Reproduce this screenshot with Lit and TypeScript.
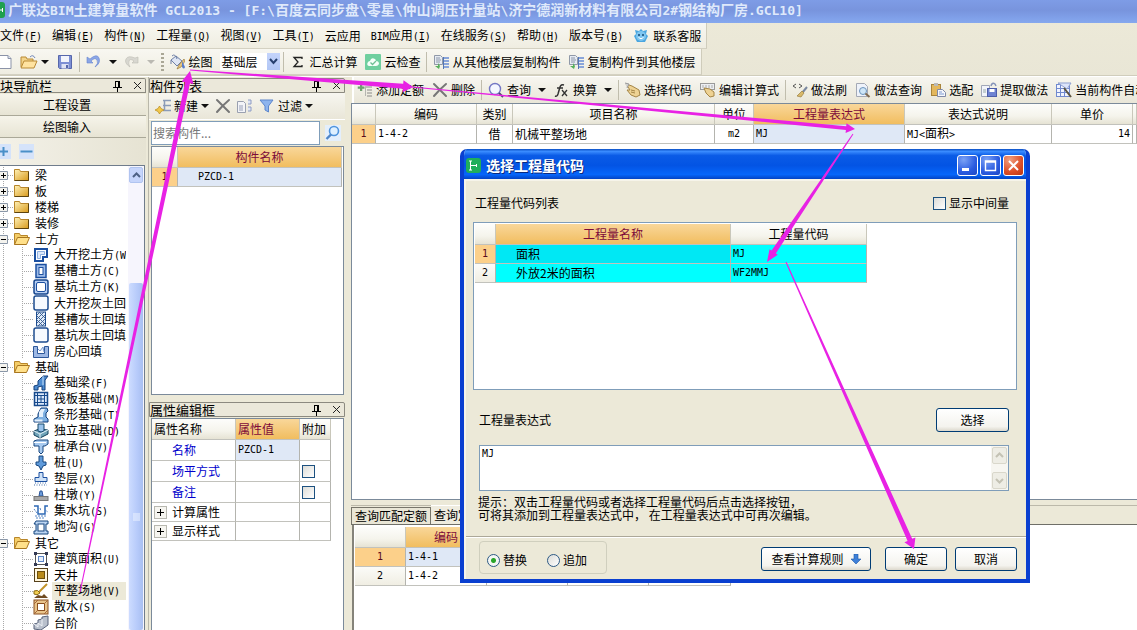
import { LitElement, html, svg, css, nothing, TemplateResult } from "lit";
import { customElement, state } from "lit/decorators.js";
import { classMap } from "lit/directives/class-map.js";

const icon = (body: unknown, w = 16, h = 16) =>
  html`<svg class="ic" width=${w} height=${h} viewBox="0 0 ${w} ${h}" aria-hidden="true">${body}</svg>`;

const I: Record<string, TemplateResult> = {
  newDoc: icon(svg`<path d="M0 1.5h8l3 3v10H0" fill="#fff" stroke="#8b93a8"/><path d="M8 1.5v3h3" fill="#dfe5f2" stroke="#8b93a8"/>`, 12),
  open: icon(svg`<path d="M1 13V3h5l1 2h6v2" fill="#f3d48a" stroke="#b98a35"/><path d="M1 14L4 7h13l-3 7z" fill="#ffe3a0" stroke="#b98a35"/><path d="M10 3q3-3 5 1" stroke="#6f86b8" fill="none"/>`, 18),
  save: icon(svg`<path d="M1.500 1.500h13v13h-12l-1-1z" fill="#7d8fd4" stroke="#5767ab"/><rect x="4" y="2" width="8" height="6" fill="#f2f4fb"/><rect x="4.500" y="10" width="7" height="4.500" fill="#dfe3f4"/><rect x="9" y="11" width="2" height="3" fill="#5767ab"/>`),
  undo: icon(svg`<path d="M1 3v6h6L5 7q4-4 6-1t-2 7q6-4 4-9T4 5z" fill="#8ba6e6" stroke="#6684cf" stroke-width=".6"/>`, 14),
  redo: icon(svg`<path d="M13 3v6H7l2-2Q5 4 4 7t1 6Q-1 9 1 5t9-1z" fill="#d8d7d0" stroke="#bdbcb4" stroke-width=".6"/>`, 14),
  pour: icon(svg`<path d="M2 6l5-4 6 5-5 5z" fill="#dfe6f4" stroke="#6d7fa6"/><path d="M3 2q3-3 5 3M2 6v4" stroke="#6d7fa6" fill="none"/><path d="M15 5l-5 6-2 4 4-2 4-6z" fill="#e8c77d" stroke="#9b7b3c" stroke-width=".7"/><path d="M13 7v6q2 3 3 0z" fill="#5b7ecb"/>`),
  cloud: icon(svg`<rect width="16" height="16" rx="1" fill="#6fcf9f"/><path d="M4 12q-3-1-1-4 1-1 2-1 1-4 5-2 1 1 1 2 3 0 3 3-1 2-3 2z" fill="#f4fff9"/><path d="M5.500 8.500l2 2 3.500-3.500" stroke="#6fbf95" stroke-width="1.300" fill="none"/>`),
  copyFrom: icon(svg`<path d="M1.500 1.500h6l2 2v7h-8z" fill="#e6ebf3" stroke="#9099a8"/><path d="M3 4h4M3 6h5M3 8h4" stroke="#8c96a8"/><path d="M5 9v3H2l4 3 1-3" fill="#56b05c"/><path d="M11 4h5M11 7h5M11 10h5M11 13h5" stroke="#8aa5da" stroke-width="2"/><path d="M10.500 3v12" stroke="#5476b5"/>`),
  chat: icon(svg`<path d="M3 6L2 2l4 1 2-2 2 2 4-1-1 4 2 2-3 6H4L1 8z" fill="#4aa6e0"/><circle cx="8" cy="8" r="5" fill="#7fc6f0"/><circle cx="6" cy="7" r="1" fill="#124a78"/><circle cx="10" cy="7" r="1" fill="#124a78"/><path d="M5.500 9.500q2.500 2.500 5 0" stroke="#fff" fill="none"/>`),
  addList: icon(svg`<path d="M1 6h3V3h3v3h3v3H7v3H4V9H1z" fill="#6fa06f" transform="scale(.75)"/><path d="M8 5h7M10 8h5M10 11h5M10 14h5" stroke="#8a8a88"/><path d="M8.500 5v9" stroke="#b5b5b0"/>`),
  del: icon(svg`<path d="M2 2q6 6 12 12M14 2Q8 7 2 14" stroke="#777" stroke-width="2" fill="none" stroke-linecap="round"/>`),
  find: icon(svg`<circle cx="7" cy="7" r="5.500" fill="#f4f7ff" stroke="#7377c4" stroke-width="1.400"/><path d="M11 11l4 4" stroke="#45456d" stroke-width="2"/>`),
  fx: icon(svg`<path d="M1 14q2 1 3-2L6 5q1-3 4-2M3 6h6" stroke="#333" stroke-width="1.500" fill="none"/><path d="M8 8l5 6M13 8l-5 6" stroke="#333" stroke-width="1.300"/>`),
  hand: icon(svg`<path d="M1 2l6 2 7 4 1 5-4 2-5-2-4-5 3 0z" fill="#eed293" stroke="#a48546"/><path d="M6 8l4 1M6 10l4 1" stroke="#a48546"/><path d="M0 1l4 1-2 4" fill="#d4d4d4" stroke="#999"/>`),
  handEdit: icon(svg`<rect x=".5" y="1.500" width="14" height="6" fill="#eceef2" stroke="#9a9a9a"/><path d="M3 3v3M6 3v3M9 3v3M12 3v3" stroke="#aaa"/><path d="M4 6l6 1 4 3v4l-4 1-4-4z" fill="#eed293" stroke="#a48546"/>`),
  brush: icon(svg`<path d="M4 2L1 4l3 2M7 2l3 2-3 2" stroke="#555" fill="none"/><path d="M15 5l-5 6" stroke="#7a88a0" stroke-width="2"/><path d="M10 9l2 2-3 4-4-1z" fill="#d9b96a" stroke="#9b7f42" stroke-width=".7"/>`),
  docFind: icon(svg`<path d="M1.500 1.500h8l3 3v10h-11z" fill="#eef2fa" stroke="#a4a9b5"/><circle cx="8" cy="9" r="3.500" fill="#cfe6f7" stroke="#6c94bb"/><path d="M10.500 11.500l4 3.500" stroke="#806a50" stroke-width="2"/>`),
  paste: icon(svg`<rect x="1.500" y="2.500" width="9" height="11" fill="#e3b75c" stroke="#a9843a"/><rect x="4" y="1" width="4" height="3" fill="#b9b9b9"/><path d="M7.500 7.500h5l3 3v4h-8z" fill="#f5f6fb" stroke="#7f88a6"/><path d="M9 10h3M9 12h5" stroke="#7f9bd2"/>`),
  extract: icon(svg`<path d="M.5 3.500h8v11h-8z" fill="#f2f4fa" stroke="#a1a7b8"/><path d="M2 8h3M2 10h3" stroke="#9aa"/><rect x="6.500" y="6.500" width="9" height="8" fill="#6f83d2" stroke="#4d5eaa"/><rect x="8.500" y="7" width="5" height="3" fill="#fff"/><path d="M10 4q1-4 4-2l1 2" stroke="#8593b8" stroke-width="1.500" fill="none"/>`),
  wand: icon(svg`<rect x=".5" y="2.500" width="13" height="12" fill="#f1f4ff" stroke="#7089cf"/><path d="M4.500 3v11M8.500 3v11M1 6.500h12M1 10.500h12" stroke="#7089cf"/><path d="M2 1h13l-4 6z" fill="#dce4fa" stroke="#8d9fd0"/><path d="M8 6l7 9" stroke="#5c5540" stroke-width="2"/>`),
  newItem: icon(svg`<path d="M8 2.500h8M8 7.500h8M8 12.500h8M9.500 2v10" stroke="#8a9bb8" stroke-width="1.500"/><path d="M4.500 8l1.500 2.500L9 12l-3 1.500L4.500 16 3 13.500 0 12l3-1.500z" fill="#f2c84b" stroke="#b68a1d" stroke-width=".7"/>`),
  copyDoc: icon(svg`<path d="M.5 3.500h6l2 2v9h-8z" fill="#f3f4f8" stroke="#9aa0b0"/><path d="M2 8h4M2 10h4M2 12h4" stroke="#98a0b8"/><path d="M11 2h3v4h-3M11 9h3v4h-3" fill="#dfe5f5" stroke="#8e9cc4"/>`),
  funnel: icon(svg`<path d="M1 2h13L9.500 8v6L6 12V8z" fill="#8db4ee" stroke="#5d86cc"/>`),
  searchBlue: icon(svg`<circle cx="9" cy="6" r="4.500" fill="#dff0ff" stroke="#4f94dd" stroke-width="1.600"/><path d="M6 9.500L1.500 14" stroke="#4f86c8" stroke-width="2.400"/>`),
  folder: icon(svg`<defs><linearGradient id="fg" x2="1" y2="1"><stop stop-color="#fff2b8"/><stop offset="1" stop-color="#d99a1c"/></linearGradient></defs><path d="M.5 13.500v-11h5l1 2h8v9z" fill="url(#fg)" stroke="#b8862a"/><path d="M.5 13.500h14v-9" fill="none" stroke="#5c430f"/>`),
  folderOpen: icon(svg`<path d="M.5 13.500v-11h5l1 2h7v3" fill="#f4cd68" stroke="#b8862a"/><path d="M.5 13.500l3-7h12l-3 7z" fill="#ffe08a" stroke="#a87620"/>`),
  t_notch: icon(svg`<path d="M2 2h12v8h-4v4H2z" fill="#fff" stroke="#1b4fa0" stroke-width="2"/><path d="M4.500 4.500h7v3h-4v4h-3z" fill="#dbe8fb" stroke="#8fb0e0"/>`),
  t_slot: icon(svg`<rect x="3" y="1.500" width="10" height="13" fill="#9dbbe8" stroke="#1b4fa0" stroke-width="1.500"/><rect x="6" y="4.500" width="4" height="7" fill="#fff" stroke="#1b4fa0"/>`),
  t_pit: icon(svg`<rect x="1" y="1" width="14" height="14" rx="2" fill="#b9d0f3" stroke="#16468f" stroke-width="1.500"/><rect x="3.500" y="3.500" width="9" height="9" rx="1.500" fill="#fff" stroke="#1b4fa0"/>`),
  t_round: icon(svg`<rect x="1" y="1" width="14" height="14" rx="2" fill="#f6faff" stroke="#1d4c90" stroke-width="1.500"/>`),
  t_hatch: icon(svg`<rect x="3.500" y="1" width="9" height="14" fill="#dfeaf8" stroke="#1d4c90"/><path d="M4 4l3-3M4 8l7-7M4 12l8-8M5 15l7-7M9 15l3-3M4 5l8 8M4 9l6 6M7 2l5 5" stroke="#33598c" stroke-width=".9"/>`),
  t_fill: icon(svg`<path d="M.5 3.500h4v7h7v-7h4v11H.5z" fill="#9db8e4" stroke="#2d5799"/><path d="M5 6l2 2 3-4 1 5" stroke="#7799cc" fill="#e4edfb"/>`),
  t_beam: icon(svg`<path d="M1 15v-4l4-1V6l5-5h5l-3 4v10H9v-4l-4 1v3z" fill="#4d8bd0" stroke="#123f7a"/><path d="M10 1v9" stroke="#c9e2fa"/>`),
  t_raft: icon(svg`<path d="M1.500 1.500h13v13h-13z" fill="#dbe9fb" stroke="#174a8d" stroke-width="1.500"/><path d="M4.500 1v14M8 4v8M11.500 1v14M1 4.500h14M4 8h8M1 11.500h14" stroke="#174a8d"/>`),
  t_strip: icon(svg`<path d="M1 15v-3l4-2V7l3-6h6l1 3-2 2v4l2 2v3z" fill="#7eb0e2" stroke="#123f7a"/><path d="M1.500 12.500h8v2h-8zM6 5l2-3h4l-2 4v4H6z" fill="#e6f1fc"/>`),
  t_indep: icon(svg`<path d="M1 8l5-2 9 1v4l-8 4-6-3z" fill="#6fa3b8" stroke="#123f5a"/><path d="M5 1h6v7l-3 1-3-1z" fill="#9ac3ec" stroke="#174a6d"/><path d="M1 8l6 3 8-4M7 11v4" stroke="#e5f2fa" fill="none"/>`),
  t_cap: icon(svg`<path d="M1 2l3-1h11v4l-3 2H10v6l-2 2-2-2V7H1z" fill="#a8caef" stroke="#16467f"/><path d="M1 3.500h12" stroke="#fff"/>`),
  t_pile: icon(svg`<path d="M6 1h4v6h3v3l-3 1-2 4-2-4-3-1V7h3z" fill="#5f9ada" stroke="#16467f"/>`),
  t_cushion: icon(svg`<path d="M6 1.500h4v5h4v4H2v-4h4z" fill="#cfe2f7" stroke="#1b4fa0"/><path d="M2 12h12M1 14h13" stroke="#446fa9" stroke-dasharray="1 1.500"/>`),
  t_pier: icon(svg`<path d="M6 9l1-5h2l1 5z" fill="#6d9ddb" stroke="#2d5799"/><rect x="1" y="9.500" width="14" height="4" fill="#a9a9a9" stroke="#777"/>`),
  t_sump: icon(svg`<path d="M1 3h4v8h7V3h3" fill="none" stroke="#2d68b5" stroke-width="1.500"/><path d="M1 6l3 4M2 13h12M3 15h9M12 7l3 2M7 5l1 3" stroke="#5585c3" stroke-dasharray="2 1"/>`),
  t_ditch: icon(svg`<path d="M3 2h12v3h-2v7h2v3H1v-3h2V5H1z" fill="#bcd5f2" stroke="#16467f"/><rect x="5" y="5" width="6" height="7" fill="#fff" stroke="#16467f"/>`),
  t_area: icon(svg`<rect x="2.500" y="2.500" width="11" height="11" fill="#fff" stroke="#555"/><rect x="5.500" y="5.500" width="5" height="5" fill="#e6eefb" stroke="#5b84c4"/><path d="M1 1h3v3H1zM12 1h3v3h-3zM1 12h3v3H1zM12 12h3v3h-3z" fill="#333a55"/>`),
  t_well: icon(svg`<rect x="1.500" y="1.500" width="13" height="13" fill="#fff6dc" stroke="#55401a"/><rect x="4.500" y="4.500" width="7" height="7" fill="#b98a18" stroke="#6e4f0a"/>`),
  t_site: icon(svg`<path d="M14 1L6 9" stroke="#c29226" stroke-width="2"/><path d="M1 8q4-2 6 2-3 3-6 1z" fill="#f3cf52" stroke="#8c6a13"/><path d="M1 15l4-3 4 1 2-2 4 4z" fill="#6f4b23"/>`),
  t_apron: icon(svg`<rect x="1" y="1" width="14" height="14" fill="#e9c48b" stroke="#8a4f1f"/><rect x="4.500" y="4.500" width="7" height="7" fill="#fff" stroke="#8a4f1f"/><path d="M1 5l4-4M1 15l4-4M11 5l4-4M11 15l4-4" stroke="#a5683a"/>`),
  t_step: icon(svg`<path d="M1 14V9l4-1V5l4-1V2l6-1v9l-7 5z" fill="#b9c0cc" stroke="#59637a"/><path d="M1 9l4 3 0-4 4 3V4" stroke="#eef1f6" fill="none"/>`),
  pin: icon(svg`<path d="M2.500 1v6M6.500 1v6M2 1.500h5M0 7.500h9M4.500 8v4M5.500 1v6" stroke="#000" fill="none"/>`, 9, 12),
  x: icon(svg`<path d="M1 1l7 7M8 1L1 8" stroke="#222" fill="none"/>`, 9, 9),
};

interface Tool { icon?: string; label?: string; title?: string; menu?: boolean; sep?: boolean }
interface Node0 { label: string; key?: string; icon?: string; open?: boolean; sel?: boolean }

const MENUS: [string, string?][] = [
  ["文件", "F"], ["编辑", "E"], ["构件", "N"], ["工程量", "Q"], ["视图", "V"], ["工具", "T"],
  ["云应用"], ["BIM应用", "I"], ["在线服务", "S"], ["帮助", "H"], ["版本号", "B"],
];

const RIGHT_TOOLS: Tool[] = [
  { icon: "addList", label: "添加定额" }, { icon: "del", label: "删除" }, { sep: true },
  { icon: "find", label: "查询", menu: true }, { icon: "fx", label: "换算", menu: true }, { sep: true },
  { icon: "hand", label: "选择代码" }, { icon: "handEdit", label: "编辑计算式" }, { sep: true },
  { icon: "brush", label: "做法刷" }, { icon: "docFind", label: "做法查询" }, { icon: "paste", label: "选配" },
  { icon: "extract", label: "提取做法" }, { icon: "wand", label: "当前构件自动套做法" },
];

const TREE: Node0[] = [
  { label: "梁" }, { label: "板" }, { label: "楼梯" }, { label: "装修" },
  { label: "土方", open: true },
  { label: "大开挖土方", key: "W", icon: "t_notch" }, { label: "基槽土方", key: "C", icon: "t_slot" },
  { label: "基坑土方", key: "K", icon: "t_pit" }, { label: "大开挖灰土回填", icon: "t_round" },
  { label: "基槽灰土回填", icon: "t_hatch" }, { label: "基坑灰土回填", icon: "t_round" },
  { label: "房心回填", icon: "t_fill" },
  { label: "基础", open: true },
  { label: "基础梁", key: "F", icon: "t_beam" }, { label: "筏板基础", key: "M", icon: "t_raft" },
  { label: "条形基础", key: "T", icon: "t_strip" }, { label: "独立基础", key: "D", icon: "t_indep" },
  { label: "桩承台", key: "V", icon: "t_cap" }, { label: "桩", key: "U", icon: "t_pile" },
  { label: "垫层", key: "X", icon: "t_cushion" }, { label: "柱墩", key: "Y", icon: "t_pier" },
  { label: "集水坑", key: "S", icon: "t_sump" }, { label: "地沟", key: "G", icon: "t_ditch" },
  { label: "其它", open: true },
  { label: "建筑面积", key: "U", icon: "t_area" }, { label: "天井", icon: "t_well" },
  { label: "平整场地", key: "V", icon: "t_site", sel: true }, { label: "散水", key: "S", icon: "t_apron" },
  { label: "台阶", icon: "t_step" },
];

// Annotation arrows: [x1, y1, x2, y2, shaft width at the head, head length, head half-width]
const ARROWS = [
  [80, 592, 190, 71, 5, 12, 6],
  [190, 70, 413, 87, 5, 10, 6],
  [412, 87, 855, 129, 4, 9, 5],
  [853, 134, 767, 262, 5, 12, 5],
  [786, 262, 914, 549, 5, 10, 6],
];

const arrowPoints = ([x1, y1, x2, y2, w, len, half]: number[]) => {
  const d = Math.hypot(x2 - x1, y2 - y1);
  const ux = (x2 - x1) / d, uy = (y2 - y1) / d;
  const bx = x2 - ux * len, by = y2 - uy * len;
  const at = (x: number, y: number, o: number) => `${(x - uy * o).toFixed(1)},${(y + ux * o).toFixed(1)}`;
  return [at(x1, y1, 0.5), at(bx, by, w / 2), at(bx, by, half), `${x2},${y2}`,
    at(bx, by, -half), at(bx, by, -w / 2), at(x1, y1, -0.5)].join(" ");
};

const base = css`
  * { box-sizing: border-box; }
  button, input, select, textarea { font: inherit; color: inherit; margin: 0; }
  button { border: 0; background: none; padding: 0; white-space: nowrap; }
  .ic { display: block; flex: none; }
  .m { font-family: "DejaVu Sans Mono", monospace; font-size: 10px; }
  table { border-collapse: separate; border-spacing: 0; table-layout: fixed; }
  th, td { border-right: 1px solid #b4b4ae; border-bottom: 1px solid #c2c2bc; padding: 0 2px;
    font-weight: normal; text-align: left; white-space: nowrap; overflow: hidden; height: 19px; line-height: 16px; background: #fff; }
  thead th { height: 21px; text-align: center; background: linear-gradient(#fdfdfb, #f5f4ec 60%, #e6e3d4); border-right-color: #c9c7ba; }
  thead th.on { background: linear-gradient(#f9d79a, #f1bd5f); color: #7c0a3a; }
  th[scope="row"] { text-align: center; background: linear-gradient(#fbfbf8, #f0eee3); }
  th[scope="row"].on { background: #fcd08a; color: #5a0c1c; }
  td.on { background: #dfe8f6; }
  td.c { text-align: center; }
  td.r { text-align: right; }
  .check { appearance: none; display: block; width: 13px; height: 13px; flex: none; border: 1px solid #1c5180;
    background: linear-gradient(135deg, #dcdcd7, #fff); }
`;

@customElement("code-dialog")
class CodeDialog extends LitElement {
  @state() private mode = "replace";
  static styles = [base, css`
    :host { display: flex; flex-direction: column; background: #ece9d8; border: 4px solid #0a3fd0; border-top: 0;
      border-radius: 7px 7px 0 0; box-shadow: inset 1px 0 #fff; overflow: hidden; }
    header { display: flex; align-items: center; gap: 5px; height: 30px; padding: 2px 3px 0 3px; margin: 0 -1px; color: #fff;
      background: linear-gradient(#0a4fc4, #3a8cff 8%, #0a5be6 22%, #0354e4 55%, #0666fa 85%, #0343c4); }
    h2 { flex: 1; margin: 0; font-size: 14px; font-weight: bold; line-height: 20px; text-shadow: 1px 1px #0a2a80; }
    .logo { border-radius: 3px; }
    .win { display: flex; gap: 2px; }
    .win button { width: 21px; height: 21px; border: 1px solid #fff; border-radius: 3px; display: grid; place-items: center;
      background: radial-gradient(circle at 30% 20%, #7ba2f5, #2a5be0 60%, #1c47c4); }
    .win button.close { background: radial-gradient(circle at 30% 20%, #f0a080, #dd4e27 60%, #b93512); }
    .body { border: solid #f6f4ea; border-width: 2px 0 0 2px; padding: 12px 9px 0 7px; flex: 1; display: flex; flex-direction: column; }
    .row { display: flex; align-items: center; justify-content: space-between; height: 20px; padding: 0 8px 0 2px; }
    .row label, .opts label { display: flex; align-items: center; gap: 3px; }
    .list { height: 168px; margin-top: 9px; border: 1px solid #7f9db9; background: #fff; padding: 1px; }
    .list td { background: #0ff; }
    .list td.on { background: #00e8f4; }
    .list td.name { padding-left: 20px; }
    .expr { height: 24px; margin-top: 18px; padding: 0 8px 0 6px; }
    .btn { height: 24px; border: 1px solid #003c74; border-radius: 3px; background: linear-gradient(#fff, #f4f3ee 80%, #dcd8cc);
      display: flex; align-items: center; justify-content: center; gap: 7px; }
    .area { display: flex; height: 46px; margin: 13px 8px 0 6px; border: 1px solid #7f9db9; background: #fff; }
    textarea { flex: 1; border: 0; padding: 1px 2px; resize: none; overflow: hidden; background: none; outline: 0; line-height: 14px; font-family: "DejaVu Sans Mono", monospace; font-size: 10px; }
    .scroll { width: 17px; display: flex; flex-direction: column; justify-content: space-between; padding: 1px; background: #f7f6f1; }
    .scroll button { height: 17px; display: grid; place-items: center; background: #eeede5; border: 1px solid #d9d7cb; border-radius: 2px; }
    p { margin: 4px 0 0 5px; line-height: 13px; }
    footer { display: flex; align-items: center; margin: 15px -9px 0 -7px; padding: 0 9px 0 13px; border-top: 1px solid #aca899; box-shadow: inset 0 1px #fff; height: 42px; }
    .opts { display: flex; gap: 20px; border: 1px solid #d0cfbe; border-radius: 4px; height: 33px; width: 128px; padding: 6px 0 0 7px; margin-top: -1px; }
    .opts input { appearance: none; width: 13px; height: 13px; border: 1px solid #2d5a85; border-radius: 50%; margin: 0;
      background: linear-gradient(135deg, #dcdcd7, #fff); }
    .opts input:checked { background: radial-gradient(circle, #2aa52a 0 2px, #f4f6f4 3px); }
    .acts { flex: 1; display: flex; justify-content: flex-end; gap: 8px; padding-top: 3px; }
    .rule { width: 110px; margin-right: 6px; }
    .std { width: 62px; }
    .pick { width: 73px; }
  `];
  render() {
    return html`
      <header>
        <svg class="logo" width="15" height="15" viewBox="0 0 15 15" aria-hidden="true"><rect width="15" height="15" fill="#1fae5b"/><path d="M4.500 3v9M4.500 7.500h6M10.500 6v3M3 3h3M3 12h3" stroke="#fff" fill="none"/></svg>
        <h2>选择工程量代码</h2>
        <div class="win">
          <button aria-label="最小化">${icon(svg`<rect x="1" y="9" width="7" height="3" fill="#fff"/>`, 13, 13)}</button>
          <button aria-label="最大化">${icon(svg`<path d="M1.500 2h10v9.500h-10zM1 3h11" stroke="#fff" fill="none" stroke-width="1.400"/>`, 13, 13)}</button>
          <button class="close" aria-label="关闭">${icon(svg`<path d="M2 2l9 9M11 2l-9 9" stroke="#fff" stroke-width="2"/>`, 13, 13)}</button>
        </div>
      </header>
      <div class="body">
        <div class="row"><span>工程量代码列表</span><label><input type="checkbox" class="check">显示中间量</label></div>
        <div class="list">
          <table style="width:392px">
            <colgroup><col style="width:21px"><col style="width:235px"><col style="width:136px"></colgroup>
            <thead><tr><th></th><th class="on">工程量名称</th><th>工程量代码</th></tr></thead>
            <tbody>
              <tr><th scope="row" class="on m">1</th><td class="name on">面积</td><td class="m">MJ</td></tr>
              <tr><th scope="row" class="m">2</th><td class="name">外放2米的面积</td><td class="m">WF2MMJ</td></tr>
            </tbody>
          </table>
        </div>
        <div class="row expr"><label for="expr">工程量表达式</label><button class="btn pick">选择</button></div>
        <div class="area">
          <textarea id="expr" .value=${"MJ"}></textarea>
          <div class="scroll">
            <button aria-label="向上">${icon(svg`<path d="M1 6l3.500-3.500L8 6" stroke="#c4c2b4" stroke-width="2" fill="none"/>`, 9, 9)}</button>
            <button aria-label="向下">${icon(svg`<path d="M1 3l3.500 3.500L8 3" stroke="#c4c2b4" stroke-width="2" fill="none"/>`, 9, 9)}</button>
          </div>
        </div>
        <p>提示：双击工程量代码或者选择工程量代码后点击选择按钮，<br>可将其添加到工程量表达式中， 在工程量表达式中可再次编辑。</p>
        <footer>
          <div class="opts" role="radiogroup">
            <label><input type="radio" name="mode" .checked=${this.mode === "replace"} @change=${() => (this.mode = "replace")}>替换</label>
            <label><input type="radio" name="mode" .checked=${this.mode === "append"} @change=${() => (this.mode = "append")}>追加</label>
          </div>
          <div class="acts">
            <button class="btn rule">查看计算规则${icon(svg`<path d="M3 0h4v5h3L5 10 0 5h3z" fill="#3f80d8" stroke="#1d57a8" stroke-width=".6"/>`, 10, 11)}</button>
            <button class="btn std">确定</button>
            <button class="btn std">取消</button>
          </div>
        </footer>
      </div>`;
  }
}

@customElement("app-root")
class AppRoot extends LitElement {
  static styles = [base, css`
    :host { display: flex; flex-direction: column; height: 100vh; overflow: hidden; position: relative; background: #ece9d8;
      font: 12px/16px "Noto Sans CJK SC", sans-serif; color: #000; }
    code-dialog { position: absolute; left: 460px; top: 149px; width: 570px; height: 434px; }
    .marks { position: absolute; left: 0; top: 0; pointer-events: none; }
    .title { display: flex; align-items: center; gap: 3px; height: 23px; flex: none; color: #dfe9fb; font-size: 14px; line-height: 18px;
      font-weight: bold; padding-bottom: 3px; white-space: pre; background: linear-gradient(#7e9ce6, #7894dd 45%, #7f9fe8 75%, #86a8ee); }
    h1 { margin: 0; font: inherit; }
    h1 .l { font-family: "DejaVu Sans Mono", monospace; font-size: 13px; }
    .bars { flex: none; background: linear-gradient(#ece9d8, #e9e6d6); border-bottom: 1px solid #d0cdbc; height: 53px; }
    .bar { display: flex; align-items: center; width: max-content; background: linear-gradient(#f8f7f1, #efede1); border-right: 1px solid #cfccbb; border-bottom: 1px solid #d4d1c2; }
    .menu { gap: 10px; height: 26px; padding-right: 5px; }
    .menu button { display: flex; align-items: center; gap: 4px; }
    .tools { height: 26px; }
    .tools button, .strip button { display: flex; align-items: center; gap: 3px; margin-right: 8px; flex: none; }
    .tools > button:last-child { margin-right: 6px; }
    .sep { width: 1px; height: 20px; background: #c0bdad; margin: 0 6px 0 -2px; flex: none; }
    .caret { border: 4px solid transparent; border-top-color: #111; border-bottom: 0; flex: none; }
    .main .caret { margin-left: 4px; }
    .off { opacity: .25; }
    .grip { width: 3px; height: 18px; margin: 0 5px 0 -2px; background: repeating-linear-gradient(#aaa796 0 2px, transparent 2px 4px); }
    select { appearance: none; width: 60px; height: 17px; border: 0; padding: 0 14px 0 1px; line-height: 16px; border-radius: 0;
      background: linear-gradient(#c4d4fb, #b1c6f5) right / 13px 100% no-repeat, #fff; }
    .pick { position: relative; display: flex; margin-right: 5px; }
    .pick .ic { position: absolute; right: 2px; top: 4px; pointer-events: none; }
    .work { flex: 1; display: flex; min-height: 0; border-top: 1px solid #fff; }
    .nav { width: 149px; flex: none; display: flex; flex-direction: column; padding: 1px 2px 0 0; border-right: 1px solid #b9b7aa; }
    .head { display: flex; align-items: center; height: 15px; flex: none; border: 1px solid #8c8a80; border-radius: 0 2px 0 0; background: #ebe8da; font-size: 13px; line-height: 13px; gap: 11px; padding-right: 3px; }
    .head h3 { margin: 0; flex: 1; font: inherit; white-space: nowrap; }
    .nav .head { border-left: 0; }
    .big { height: 22px; flex: none; padding-right: 12px; background: linear-gradient(#f6f4ea, #e7e4d4); border-bottom: 1px solid #aaa898; }
    .big:first-of-type { margin-top: 1px; }
    .pm { display: flex; align-items: center; gap: 8px; height: 27px; flex: none; background: linear-gradient(90deg, #f3f1e8, #e6e3d3); }
    .pm button { display: block; background: #d5e3fa; }
    .tree { flex: 1; min-height: 0; display: flex; background: #fff; border: 1px solid #6f7c8c; border-left: 0; border-bottom: 0; margin-right: 1px; overflow: hidden; }
    ul { list-style: none; margin: 1px 2px 0 0; padding: 0; flex: 1; min-width: 0; overflow: hidden;
      background: repeating-linear-gradient(#a9a9a9 0 1px, transparent 1px 2px) 3px 0 / 1px 100% no-repeat; }
    li { display: flex; align-items: center; height: 16px; gap: 5px; white-space: nowrap; }
    li.sub { padding-left: 33px; gap: 3px; background:
      repeating-linear-gradient(#a9a9a9 0 1px, transparent 1px 2px) 22px 0 / 1px 100% no-repeat,
      repeating-linear-gradient(90deg, #a9a9a9 0 1px, transparent 1px 2px) 22px 8px / 11px 1px no-repeat; }
    li .name { padding: 0 2px; }
    li.top .name { padding: 0; }
    li.sel .name { background: #ece9d8; padding-right: 6px; }
    li.top { background: repeating-linear-gradient(90deg, #a9a9a9 0 1px, transparent 1px 2px) 4px 8px / 10px 1px no-repeat; }
    .tog { width: 8px; height: 9px; margin-right: 1px; }
    .tog svg { display: block; background: #fff; }
    .vs { width: 16px; flex: none; padding: 1px 1px 0; background: #f6f5fd; display: flex; flex-direction: column; }
    .vs button { height: 16px; background: #c6d5fb; border: 1px solid #b0c4f0; border-radius: 2px; display: grid; place-items: center; }
    .vs .thumb { flex: 1; margin-top: 100px; background: linear-gradient(90deg, #cddcff, #b6cafa 60%, #a9bff0); border-radius: 2px; display: grid; place-items: center; padding-top: 120px; }
    .mid { width: 196px; flex: none; display: flex; flex-direction: column; padding-top: 1px; }
    .mid .strip { height: 26px; padding-left: 6px; }
    .mid .strip button { margin-right: 6px; }
    .strip { display: flex; align-items: center; flex: none; background: linear-gradient(#f7f6f0, #e9e6d8); overflow: hidden; }
    .find { display: flex; align-items: center; height: 26px; border-top: 1px solid #fff; padding-left: 2px; gap: 5px; }
    .find input { width: 169px; height: 24px; border: 1px solid #7f9db9; padding: 0 1px; background: #fff; outline: 0; line-height: 18px; }
    .find input::placeholder { color: #777; opacity: 1; }
    .find button { background: #e4effc; }
    .box { background: #fff; border: 1px solid #7b8a9a; margin-left: 2px; }
    .parts { height: 249px; flex: none; margin-top: 1px; margin-right: 1px; }
    .parts .item { padding-left: 20px; }
    .props { flex: 1; margin-right: 1px; border-bottom: 0; margin-top: 1px; }
    .mid .second { margin-top: 7px; }
    .props td.n { color: #00c; padding-left: 20px; }
    .props thead th { text-align: left; }
    .props tr.t td { height: 21px; }
    .props .g { display: flex; align-items: center; gap: 5px; }
    .props .g button { width: 13px; height: 13px; border: 1px solid #b8b8b0; background: #f6f5f0; display: grid; place-items: center; }
    .main { flex: 1; min-width: 0; display: flex; flex-direction: column; padding-left: 6px; }
    .main .strip { height: 26px; border-left: 2px solid #fff; padding-left: 3px; margin-left: 1px; }
    .grid { background: #fff; border: solid #7b8a9a; border-width: 1px 0 1px 1px; height: 397px; flex: none; overflow: hidden; }
    .grid table { width: 100%; }
    .tabs { display: flex; align-items: flex-end; margin-top: 5px; height: 20px; flex: none; border-top: 1px solid #bcb9aa; border-bottom: 1px solid #6f6f68; }
    .tabs button { height: 17px; padding: 0 3px; border: 1px solid #77756a; border-bottom: 0; background: #e9e6d6; }
    .tabs button.now { height: 19px; border: 0; border-top: 1px solid #fff; background: #efecdf; }
    .low { flex: 1; background: #fff; border-left: 2px solid #85837a; padding: 2px 0 0 1px; margin-left: 1px; overflow: hidden; }
  `];

  private tool(t: Tool) {
    return t.sep ? html`<span class="sep"></span>`
      : html`<button>${t.icon ? I[t.icon] : nothing}${t.label}${t.menu ? html`<span class="caret"></span>` : nothing}</button>`;
  }
  private menuLabel(t: string) {
    const latin = /^[A-Z]+/.exec(t)?.[0] ?? "";
    return html`${latin ? html`<span class="m">${latin}</span>` : nothing}${t.slice(latin.length)}`;
  }
  private head(text: string, cls = "") {
    return html`<div class="head ${cls}"><h3>${text}</h3><button aria-label="固定">${I.pin}</button><button aria-label="关闭">${I.x}</button></div>`;
  }
  private node(n: Node0) {
    const top = !n.icon;
    return html`<li class=${classMap({ top, sub: !top, sel: !!n.sel })}>
      ${top ? html`<button class="tog" aria-label=${n.open ? "折叠" : "展开"}><svg width="8" height="9" viewBox="0 0 8 9"><path d="M0 .5h7.500v8H0" fill="#f4f3ee" stroke="#8a97a8"/><path d="${n.open ? "M1 4.500h5" : "M1 4.500h5M3.500 2v5"}" stroke="#000"/></svg></button>` : nothing}
      ${I[n.icon ?? (n.open ? "folderOpen" : "folder")]}
      <span class="name">${n.label}${n.key ? html`<span class="m">(${n.key})</span>` : nothing}</span></li>`;
  }

  render() {
    const L = (s: string) => html`<span class="l">${s}</span>`;
    return html`
      <div class="title">
        <svg class="ic" width="5" height="16" viewBox="0 0 5 16" aria-hidden="true"><path d="M0 0h2q3 0 3 3v10q0 3-3 3H0z" fill="#1fa04d"/><path d="M0 8h3M2.500 6v4" stroke="#fff"/></svg>
        <h1>广联达${L("BIM")}土建算量软件${L(" GCL2013 - [F:\\")}百度云同步盘${L("\\")}零星${L("\\")}仲山调压计量站${L("\\")}济宁德润新材料有限公司${L("2#")}钢结构厂房${L(".GCL10]")}</h1>
      </div>
      <div class="bars">
        <nav class="bar menu">
          ${MENUS.map(([t, k]) => html`<button><span>${this.menuLabel(t)}${k ? html`<span class="m">(<u>${k}</u>)</span>` : nothing}</span></button>`)}
          <button>${I.chat}联系客服</button>
        </nav>
        <div class="bar tools">
          <button aria-label="新建">${I.newDoc}</button>
          <button aria-label="打开">${I.open}<span class="caret"></span></button>
          <button aria-label="保存">${I.save}</button>
          <span class="sep"></span>
          <button aria-label="撤销">${I.undo}&nbsp;<span class="caret"></span></button>
          <button aria-label="恢复">${I.redo}&nbsp;<span class="caret off"></span></button>
          <span class="grip"></span>
          <button>${I.pour}绘图</button>
          <span class="pick"><select aria-label="楼层"><option>基础层</option></select>${icon(svg`<path d="M1 2l3.500 4L8 2" stroke="#27406f" stroke-width="2" fill="none"/>`, 9, 9)}</span>
          <span class="sep"></span>
          <button>${icon(svg`<path d="M12 5V3.500H4L8 8l-4 4.500h8V11" stroke="#222" stroke-width="1.300" fill="none"/>`)}汇总计算</button>
          <button>${I.cloud}云检查</button>
          <span class="sep"></span>
          <button>${I.copyFrom}从其他楼层复制构件</button>
          <button>${I.copyFrom}复制构件到其他楼层</button>
        </div>
      </div>
      <div class="work">
        <aside class="nav">
          ${this.head("块导航栏")}
          <button class="big">工程设置</button>
          <button class="big">绘图输入</button>
          <div class="pm">
            <button aria-label="全部展开">${icon(svg`<path d="M0 7.500h8M3.500 3v9" stroke="#4a90c8" stroke-width="2"/>`, 11, 15)}</button>
            <button aria-label="全部折叠">${icon(svg`<path d="M1.500 7.500h12" stroke="#4a90c8" stroke-width="2"/>`, 15, 15)}</button>
          </div>
          <div class="tree">
            <ul>${TREE.map((n) => this.node(n))}</ul>
            <div class="vs"><button aria-label="向上">${icon(svg`<path d="M1 6l3.500-3.500L8 6" stroke="#4d6185" stroke-width="2" fill="none"/>`, 9, 9)}</button>
              <div class="thumb">${icon(svg`<path d="M0 1h7M0 3h7M0 5h7M0 7h7" stroke="#eef4ff"/>`, 7, 8)}</div></div>
          </div>
        </aside>
        <section class="mid">
          ${this.head("构件列表")}
          <div class="strip">
            <button>${I.newItem}新建<span class="caret"></span></button>
            <button aria-label="删除">${I.del}</button>
            <button aria-label="复制">${I.copyDoc}</button>
            <button>${I.funnel}过滤<span class="caret"></span></button>
          </div>
          <div class="find"><input type="text" placeholder="搜索构件..." aria-label="搜索构件"><button aria-label="搜索">${I.searchBlue}</button></div>
          <div class="box parts">
            <table style="width:190px">
              <colgroup><col style="width:26px"><col></colgroup>
              <thead><tr><th></th><th class="on">构件名称</th></tr></thead>
              <tbody><tr><th scope="row" class="on m">1</th><td class="on m item">PZCD-1</td></tr></tbody>
            </table>
          </div>
          ${this.head("属性编辑框", "second")}
          <div class="box props">
            <table style="width:179px">
              <colgroup><col style="width:84px"><col style="width:64px"><col style="width:31px"></colgroup>
              <thead><tr><th>属性名称</th><th class="on">属性值</th><th>附加</th></tr></thead>
              <tbody>
                <tr class="t"><td class="n">名称</td><td class="on m">PZCD-1</td><td></td></tr>
                <tr class="t"><td class="n">场平方式</td><td></td><td><input type="checkbox" class="check" aria-label="场平方式附加"></td></tr>
                <tr class="t"><td class="n">备注</td><td></td><td><input type="checkbox" class="check" aria-label="备注附加"></td></tr>
                ${["计算属性", "显示样式"].map((t) => html`<tr><td><div class="g"><button aria-label="展开">${icon(svg`<path d="M0 3.500h7M3.500 0v7" stroke="#000"/>`, 7, 7)}</button>${t}</div></td><td></td><td></td></tr>`)}
              </tbody>
            </table>
          </div>
        </section>
        <main class="main">
          <div class="strip">${RIGHT_TOOLS.map((t) => this.tool(t))}</div>
          <div class="grid">
            <table>
              <colgroup>${[24, 101, 36, 202, 39, 151, 147, 81].map((w) => html`<col style="width:${w}px">`)}<col></colgroup>
              <thead><tr><th></th><th>编码</th><th>类别</th><th>项目名称</th><th>单位</th><th class="on">工程量表达式</th><th>表达式说明</th><th>单价</th><th></th></tr></thead>
              <tbody><tr><th scope="row" class="on m">1</th><td class="m">1-4-2</td><td class="c">借</td><td>机械平整场地</td><td class="c m">m2</td><td class="on m">MJ</td><td><span class="m">MJ&lt;</span>面积<span class="m">&gt;</span></td><td class="r m">14</td><td></td></tr></tbody>
            </table>
          </div>
          <div class="tabs"><button>查询匹配定额</button><button class="now">查询定额库</button></div>
          <div class="low">
            <table style="width:376px">
              <colgroup>${[51, 81, 81, 81, 82].map((w) => html`<col style="width:${w}px">`)}</colgroup>
              <thead><tr><th></th><th class="on">编码</th><th></th><th></th><th></th></tr></thead>
              <tbody>
                <tr><th scope="row" class="on m">1</th><td class="on m">1-4-1</td><td class="on"></td><td class="on"></td><td class="on"></td></tr>
                <tr><th scope="row" class="m">2</th><td class="m">1-4-2</td><td></td><td></td><td></td></tr>
              </tbody>
            </table>
          </div>
        </main>
      </div>
      <code-dialog></code-dialog>
      <svg class="marks" width="1137" height="630" viewBox="0 0 1137 630" aria-hidden="true">
        ${ARROWS.map((a) => svg`<polygon points=${arrowPoints(a)} fill="#e822e4"/>`)}
      </svg>`;
  }
}
